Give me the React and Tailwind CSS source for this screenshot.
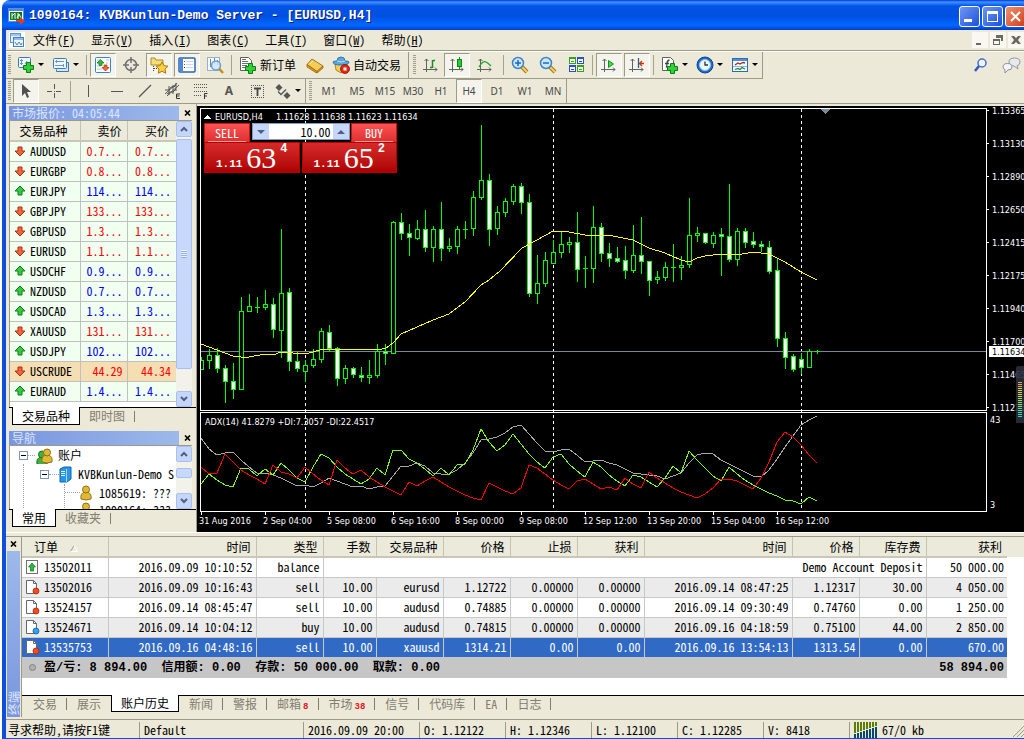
import React from "react";

const QUOTES = [
  ["down", "AUDUSD", "0.7...", "0.7..."],
  ["down", "EURGBP", "0.8...", "0.8..."],
  ["up", "EURJPY", "114...", "114..."],
  ["down", "GBPJPY", "133...", "133..."],
  ["down", "GBPUSD", "1.3...", "1.3..."],
  ["down", "EURUSD", "1.1...", "1.1..."],
  ["up", "USDCHF", "0.9...", "0.9..."],
  ["up", "NZDUSD", "0.7...", "0.7..."],
  ["up", "USDCAD", "1.3...", "1.3..."],
  ["down", "XAUUSD", "131...", "131..."],
  ["up", "USDJPY", "102...", "102..."],
  ["down", "USCRUDE", "44.29", "44.34"],
  ["up", "EURAUD", "1.4...", "1.4..."],
];

const ORDERS = [
  ["red", "13502016", "2016.09.09 10:16:43", "sell", "10.00", "eurusd", "1.12722", "0.00000", "0.00000", "2016.09.14 08:47:25", "1.12317", "30.00", "4 050.00"],
  ["red", "13524157", "2016.09.14 08:45:47", "sell", "10.00", "audusd", "0.74885", "0.00000", "0.00000", "2016.09.14 09:30:49", "0.74760", "0.00", "1 250.00"],
  ["blue", "13524671", "2016.09.14 10:04:12", "buy", "10.00", "audusd", "0.74815", "0.00000", "0.00000", "2016.09.16 04:18:59", "0.75100", "44.00", "2 850.00"],
  ["red", "13535753", "2016.09.16 04:48:16", "sell", "10.00", "xauusd", "1314.21", "0.00", "0.00", "2016.09.16 13:54:13", "1313.54", "0.00", "670.00"],
];

// high, body top, body bottom, low, bearish
const CANDLES = [
  [357, 360, 369, 369, 0], [349, 355, 360, 368, 0], [348, 355, 368, 372, 1], [365, 368, 381, 402, 1],
  [363, 381, 389, 398, 1], [297, 311, 389, 389, 0], [294, 306, 311, 311, 0], [297, 307, 307, 312, 0],
  [290, 304, 307, 309, 0], [298, 304, 329, 337, 1], [229, 293, 330, 357, 0], [288, 292, 361, 370, 1],
  [352, 361, 368, 371, 1], [360, 365, 371, 381, 0], [349, 359, 365, 367, 0], [328, 331, 359, 362, 0],
  [325, 332, 348, 351, 1], [347, 348, 378, 385, 1], [365, 368, 378, 383, 0], [367, 368, 374, 377, 1],
  [367, 375, 377, 381, 1], [360, 375, 377, 383, 0], [344, 351, 375, 377, 0], [344, 351, 353, 364, 1],
  [221, 222, 353, 353, 0], [213, 222, 233, 239, 1], [224, 233, 237, 255, 1], [220, 229, 238, 239, 0],
  [210, 229, 247, 251, 1], [226, 229, 247, 261, 0], [202, 229, 248, 260, 1], [238, 246, 248, 251, 0],
  [226, 229, 246, 253, 0], [221, 229, 229, 238, 0], [191, 197, 228, 235, 0], [125, 180, 197, 199, 0],
  [174, 180, 229, 245, 1], [206, 212, 228, 234, 0], [198, 201, 212, 216, 0], [184, 186, 201, 204, 0],
  [183, 186, 202, 213, 1], [194, 202, 293, 296, 1], [255, 283, 293, 303, 0], [252, 260, 283, 286, 0],
  [240, 252, 263, 263, 0], [231, 244, 252, 257, 0], [237, 242, 244, 252, 0], [212, 242, 269, 281, 1],
  [256, 268, 269, 287, 0], [206, 227, 268, 282, 0], [223, 227, 253, 261, 1], [243, 253, 258, 266, 1],
  [247, 258, 261, 262, 1], [246, 260, 270, 278, 1], [225, 255, 270, 272, 0], [217, 255, 261, 273, 1],
  [261, 261, 280, 295, 1], [271, 277, 279, 283, 0], [262, 267, 277, 280, 0], [244, 267, 268, 281, 0],
  [256, 265, 267, 279, 0], [198, 235, 264, 267, 0], [227, 233, 235, 241, 0], [233, 233, 242, 243, 1],
  [232, 235, 243, 247, 0], [228, 234, 236, 275, 1], [184, 236, 259, 261, 1], [228, 231, 259, 265, 0],
  [228, 231, 242, 247, 1], [232, 241, 244, 247, 1], [241, 244, 246, 251, 1], [241, 247, 271, 273, 1],
  [259, 270, 338, 346, 1], [332, 338, 357, 368, 1], [354, 356, 369, 371, 1], [353, 359, 367, 373, 1],
  [349, 351, 367, 367, 0], [350, 351, 351, 353, 0],
];

const MA =
  "201,344 217,350 233,356 241,357 249,357 265,354 273,355 281,352 305,354 324,349 363,349 378,350 386,348 393,343 401,334 417,327 433,320 449,314 465,302 481,285 489,280 500,271 522,248 537,240 553,231 569,232 585,235 613,236 633,240 649,248 665,253 681,260 689,262 697,258 705,256 721,254 737,255 753,252 769,254 785,262 801,272 817,280";

const ADX = [438, 449, 455, 453, 452, 460, 467, 473, 473, 475, 478, 482, 486, 485, 487, 483, 478, 481, 484, 487, 486, 489, 487, 486, 476, 466, 466, 463, 466, 473, 474, 474, 470, 463, 453, 440, 439, 437, 433, 427, 425, 434, 443, 451, 452, 450, 449, 455, 462, 461, 460, 463, 465, 469, 473, 474, 475, 476, 479, 476, 473, 463, 455, 453, 454, 460, 464, 468, 472, 476, 477, 470, 459, 447, 436, 425, 420, 416];
const DI_PLUS = [484, 474, 480, 485, 487, 468, 469, 476, 469, 475, 463, 470, 478, 482, 467, 454, 458, 467, 474, 479, 484, 479, 468, 475, 450, 450, 459, 463, 469, 476, 468, 475, 465, 464, 450, 429, 442, 451, 445, 434, 444, 454, 462, 468, 457, 454, 464, 471, 477, 462, 467, 475, 481, 486, 475, 477, 482, 487, 478, 466, 473, 451, 460, 468, 476, 481, 467, 474, 480, 485, 489, 493, 496, 500, 501, 504, 497, 501];
const DI_MINUS = [467, 474, 473, 454, 462, 470, 475, 479, 484, 465, 472, 474, 478, 467, 474, 480, 485, 460, 468, 474, 470, 477, 482, 487, 491, 495, 482, 486, 481, 477, 482, 487, 491, 495, 498, 500, 483, 487, 491, 494, 488, 465, 468, 474, 480, 485, 489, 481, 479, 484, 489, 487, 490, 478, 484, 488, 472, 478, 483, 488, 492, 495, 498, 494, 488, 479, 479, 481, 485, 489, 478, 462, 442, 432, 437, 445, 455, 463];

const PRICES = ["1.13365", "1.13130", "1.12890", "1.12650", "1.12415", "1.12175", "1.11940", "1.11700", "1.11465", "1.11225"];
const DATES = ["31 Aug 2016", "2 Sep 04:00", "5 Sep 08:00", "6 Sep 16:00", "8 Sep 00:00", "9 Sep 08:00", "12 Sep 12:00", "13 Sep 20:00", "15 Sep 04:00", "16 Sep 12:00"];

const toPoints = (ys) => ys.map((y, i) => `${201 + 8 * i},${y}`).join(" ");

/* ---------- icons ---------- */

const Svg = ({ w = 18, h = 18, children }) => (
  <svg width={w} height={h} viewBox={`0 0 ${w} ${h}`} fill="none" className="shrink-0">
    {children}
  </svg>
);

const Plus = ({ x, y }) => (
  <path
    transform={`translate(${x} ${y})`}
    d="M3.5.5h4v3h3v4h-3v3h-4v-3h-3v-4h3z"
    fill="#2fd03a"
    stroke="#0a7d12"
  />
);

const AppIcon = () => (
  <Svg w={17} h={17}>
    <rect x="0.5" y="0.5" width="15" height="13" fill="#fff" stroke="#5b8fd8" />
    <path d="M1 2h14" stroke="#4a86e0" strokeWidth="2" />
    <rect x="2" y="4" width="12" height="8" fill="#0d7a1c" />
    <path d="M4 5v6M7 5v6M4 8l3-3M9 10l2-4 2 4M10 5v6" stroke="#fff" />
    <path d="M8 12h4V9l5 4-5 4v-3H8z" fill="#e83b22" />
  </Svg>
);

const ChartDocIcon = () => (
  <Svg w={16} h={16}>
    <rect width="16" height="16" fill="#fff" />
    <rect x="1.5" y="1.5" width="10" height="9" fill="#eaf2ff" stroke="#5a96dc" />
    <path d="M2 3h9" stroke="#5a96dc" />
    <rect x="4.5" y="5.5" width="10" height="9" fill="#eef5ff" stroke="#3f80d0" />
    <path d="M5 7h9" stroke="#3f80d0" />
    <path d="M6 10l2 3 2-3 2 3 1-2" stroke="#3f80d0" />
  </Svg>
);

const NewChartIcon = () => (
  <Svg>
    <rect x="1.5" y="1.5" width="12" height="10" rx="1" fill="#f2f8ff" stroke="#3a78b8" />
    <path d="M4.500 3v6M3 4.500h3M3 7.500h3M8 8l2-3" stroke="#6898c8" />
    <Plus x={6} y={6} />
  </Svg>
);

const ProfilesIcon = () => (
  <Svg>
    <path d="M4.500 13.500v2h12v-9h-2" fill="#d8e8fa" stroke="#3a78b8" />
    <rect x="1.5" y="2.5" width="13" height="10" rx="1" fill="#eff6ff" stroke="#3a78b8" />
    <path d="M3 5.500h9M3 9.500h9M4.500 4v3M11.500 8v3" stroke="#6898c8" />
  </Svg>
);

const MarketIcon = () => (
  <Svg>
    <rect x="1.5" y="1.500" width="15" height="15" rx="1" fill="#fff" stroke="#3f80c8" />
    <path d="M3 4h3M3 7h1M3 10h4M3 13h5M12 4h3M12 7h2" stroke="#a8c8e8" />
    <path d="M6.500 3.500l3.500 3.500H8v2.500H5V7H3z" fill="#2fb83a" stroke="#0a7d12" strokeWidth=".7" />
    <path d="M11.500 15l3.500-3.500h-2V9h-3v2.500H8z" fill="#f06a3a" stroke="#b02a08" strokeWidth=".7" />
  </Svg>
);

const TargetIcon = () => (
  <Svg>
    <circle cx="9" cy="9" r="5.500" stroke="#707070" strokeWidth="1.500" />
    <path d="M9 1v6M9 11v6M1 9h6M11 9h6" stroke="#707070" strokeWidth="1.500" />
  </Svg>
);

const STAR = "M12 6l1.900 3.600 4.100.6-3 2.900.7 4.100L12 15.300l-3.700 1.900.7-4.100-3-2.900 4.100-.6z";

const NavigatorIcon = () => (
  <Svg>
    <path d="M1 2h4l1 2h7v5H1z" fill="#f6dc78" stroke="#b08a20" />
    <path d="M3.500 10v6M4 12.500h4" stroke="#444" strokeDasharray="1 1" />
    <path d={STAR} fill="#f8d048" stroke="#b07808" />
  </Svg>
);

const TerminalIcon = () => (
  <Svg>
    <rect x="1" y="2" width="16" height="14" rx="1" fill="#fff" stroke="#2c64b0" strokeWidth="1.500" />
    <rect x="2" y="3" width="3" height="12" fill="#4a88d8" />
    <path d="M8 5.500h7M8 8.500h7M8 11.500h7" stroke="#c8d8ea" />
    <path d="M6 5.500h1M6 8.500h1" stroke="#e03020" />
    <path d="M6 11.500h1" stroke="#222" />
  </Svg>
);

const TesterIcon = () => (
  <Svg>
    <rect x="1.5" y="1.5" width="12" height="13" fill="#f6f9fd" stroke="#9ab0c8" />
    <path d="M4.500 3v8M8.500 2v6M11.500 4v5" stroke="#6888b0" />
    <circle cx="10" cy="9.500" r="4.500" fill="#cfe6fa" fillOpacity=".8" stroke="#6aa0d0" strokeWidth="1.500" />
    <path d="M13.500 13l3.500 4" stroke="#c89018" strokeWidth="2.500" />
  </Svg>
);

const NewOrderIcon = () => (
  <Svg>
    <path d="M1.500 1.500h8l3 3v10h-11z" fill="#fff" stroke="#606060" />
    <path d="M3 5.500h6M3 7.500h7M3 9.500h5M3 11.500h4M3 3.500h4" stroke="#707070" />
    <Plus x={6} y={7} />
  </Svg>
);

const BookIcon = () => (
  <Svg>
    <path d="M1 8.500L6 3l11 7-6 5.500z" fill="#f4cc58" stroke="#a87010" />
    <path d="M1 8.500v2.500l9.500 6 .5-1.500zM11 15.500l6-5.500v2l-6 5z" fill="#d89c28" stroke="#a06808" strokeWidth=".8" />
    <path d="M4 8l3-3" stroke="#fff0b0" />
  </Svg>
);

const AutoTradeIcon = () => (
  <Svg>
    <path d="M3 8l1 6 5 3 5-3 1-6z" fill="#f0d058" stroke="#b08818" />
    <path d="M1 6q0-1 4-1 0-4 4-4t4 4q4 0 4 1 0 3-8 3T1 6z" fill="#5aa8dc" stroke="#2c78b0" />
    <path d="M5 5q4 2 8 0" stroke="#b8e0f8" />
    <circle cx="13" cy="13" r="4.500" fill="#e02818" stroke="#980c04" strokeWidth=".8" />
    <rect x="11.500" y="11.500" width="3" height="3" fill="#fff" />
  </Svg>
);

const Axes = () => (
  <g stroke="#606060">
    <path d="M4.500 3v13M1 13.500h14" />
    <path d="M2.500 5l2-2 2 2M13 11.500l2 2-2 2" />
  </g>
);

const BarsIcon = () => (
  <Svg>
    <Axes />
    <path d="M10.500 4v8M8 11.500h2M11 4.500h2" stroke="#109020" strokeWidth="1.500" />
  </Svg>
);

const CandleIcon = () => (
  <Svg>
    <Axes />
    <path d="M11.500 1v12" stroke="#0a8a18" />
    <rect x="9.5" y="3.500" width="4" height="7" fill="#2cc83c" stroke="#0a8a18" />
  </Svg>
);

const LineIcon = () => (
  <Svg>
    <Axes />
    <path d="M3 11q4-7 7-5 2 1 5 4" stroke="#20a030" strokeWidth="1.300" />
  </Svg>
);

const ZoomIcon = ({ plus }) => (
  <Svg>
    <path d="M11 11l5 5" stroke="#a87810" strokeWidth="4" />
    <path d="M11 11l5 5" stroke="#f4d060" strokeWidth="2" />
    <circle cx="7" cy="7" r="5.500" fill="#c8e6fc" stroke="#3c84c8" strokeWidth="1.500" />
    <path d={plus ? "M4 7h6M7 4v6" : "M4 7h6"} stroke="#2068b0" strokeWidth="1.500" />
  </Svg>
);

const TilesIcon = () => (
  <Svg>
    {[
      [2, 1, "#3ca014"],
      [10, 1, "#2850c8"],
      [2, 9, "#2850c8"],
      [10, 9, "#3ca014"],
    ].map(([x, y, c]) => (
      <g key={`${x}-${y}`}>
        <rect x={x} y={y} width="7" height="7" fill={c} />
        <rect x={x + 1} y={y + 2} width="5" height="4" fill="#f2f6ff" />
        <path d={`M${x + 2} ${y + 4.500}h3`} stroke={c} />
      </g>
    ))}
  </Svg>
);

const ScrollIcon = () => (
  <Svg>
    <Axes />
    <path d="M8.500 4.500v7l5-3.500z" fill="#4cd84c" stroke="#109020" />
  </Svg>
);

const ShiftIcon = () => (
  <Svg>
    <Axes />
    <path d="M10.500 2v10" stroke="#2c5c90" strokeWidth="1.300" />
    <path d="M16 7.500h-4M14 5l-2.500 2.500L14 10" stroke="#c83808" strokeWidth="1.300" />
  </Svg>
);

const IndicatorIcon = () => (
  <Svg>
    <path d="M1.500 1.500h8l3 3v10h-11z" fill="#fff" stroke="#606060" />
    <path d="M5 11.500q1-1 1-4t2.500-3.500M4 7.500h4" stroke="#444" strokeWidth="1.300" />
    <Plus x={6} y={7} />
  </Svg>
);

const ClockIcon = () => (
  <Svg>
    <circle cx="9" cy="9" r="8" fill="#1c6cc8" stroke="#0c488c" />
    <circle cx="9" cy="9" r="5.500" fill="#eef6ff" stroke="#8cc0f0" />
    <path d="M9 5.500V9h3" stroke="#333" strokeWidth="1.300" />
  </Svg>
);

const TemplateIcon = () => (
  <Svg>
    <rect x="1.5" y="2.500" width="15" height="13" fill="#f4f9ff" stroke="#2c6cb0" />
    <path d="M2 4h14" stroke="#4a90dc" strokeWidth="2" />
    <path d="M4 9l3-2 2 1 3-1.500 2 .5" stroke="#b02818" strokeWidth="1.300" />
    <path d="M2 10.500h14" stroke="#8cb4e0" />
    <path d="M4 13.500l3-1 2 1 2-2 3 1.500" stroke="#188828" strokeWidth="1.300" />
  </Svg>
);

const SearchIcon = () => (
  <Svg w={16} h={16}>
    <circle cx="9" cy="6" r="4" fill="#f0f6ff" stroke="#4470d0" strokeWidth="1.500" />
    <path d="M6 9l-4 5" stroke="#3058c0" strokeWidth="2.500" />
  </Svg>
);

const ChatIcon = () => (
  <Svg w={20} h={18}>
    <path d="M8 6q0-4 5.500-4T19 6q0 3-3 3.800L17 13l-4-3Q8 10 8 6z" fill="#e8e8f0" stroke="#9898a4" />
    <path d="M2 11q0-3.500 4.500-3.500T11 11q0 3-4 3l-3 3v-3.500Q2 13 2 11z" fill="#f4f4fa" stroke="#8c8c98" />
  </Svg>
);

const CursorIcon = () => (
  <Svg>
    <path d="M5 2v12l3-3 2 5 2-1-2-5h4z" fill="#505050" />
  </Svg>
);
const CrosshairIcon = () => (
  <Svg>
    <path d="M9.500 2v5M9.500 11v5M2 9.500h5M11 9.500h5M9 9.500h1" stroke="#555" />
  </Svg>
);
const VLineIcon = () => (
  <Svg>
    <path d="M8.500 3v12" stroke="#555" />
  </Svg>
);
const HLineIcon = () => (
  <Svg>
    <path d="M3 9.500h12" stroke="#555" />
  </Svg>
);
const TrendIcon = () => (
  <Svg>
    <path d="M3 15L15 3" stroke="#555" strokeWidth="1.300" />
  </Svg>
);
const ChannelIcon = () => (
  <Svg>
    <path d="M1 12L13 1M3 14L15 3M1 8h4l2-3h3l2-2M3 12l3-2h3l3-3M5 4v9M9 3v9M12 1v8" stroke="#555" />
    <path d="M16 12h-3.500v4.500H16M12.500 14h3" stroke="#333" />
  </Svg>
);
const FiboIcon = () => (
  <Svg>
    <path d="M2 2.500h14M2 5.500h14M2 9.500h14M2 13.500h8" stroke="#555" strokeDasharray="1 1" />
    <path d="M15.500 11.500h-3V17M12.500 14h2.500" stroke="#333" />
  </Svg>
);
const LabelIcon = () => (
  <Svg>
    <path d="M3 3.500h13M3 15.500h13M3.500 3v13M15.500 3v13" stroke="#555" strokeDasharray="1 1" />
    <path d="M6 6.500h7M9.500 6v8" stroke="#444" strokeWidth="1.800" />
  </Svg>
);
const ArrowsIcon = () => (
  <Svg>
    <path d="M5 2l3.500 3.500L5 9 1.500 5.500zM13 10l3.500 3.500L13 17l-3.500-3.500z" fill="#555" />
    <path d="M4 9.500l3 3 5-5" stroke="#555" strokeWidth="1.300" />
  </Svg>
);

const Trend = ({ dir }) => (
  <Svg w={12} h={12}>
    {dir === "up" ? (
      <path d="M6 1l5 5H8v4H4V6H1z" fill="#3cc83c" stroke="#0a7d20" />
    ) : (
      <path d="M6 11L1 6h3V2h4v4h3z" fill="#f0643c" stroke="#b03010" />
    )}
  </Svg>
);

const DocIcon = ({ kind }) => (
  <Svg w={15} h={16}>
    {kind === "balance" ? (
      <>
        <rect x="1.5" y="1.500" width="11" height="13" fill="#fff" stroke="#707070" />
        <path d="M7 4l3.500 4H8.500v4h-3V8h-2z" fill="#2cb83c" stroke="#0a7d12" strokeWidth=".7" />
      </>
    ) : (
      <>
        <path d="M1.500 1.500h7l3 3v10h-10z" fill="#fff" stroke="#606870" />
        <path d="M8.500 1.500v3h3" stroke="#606870" />
        <circle cx="11" cy="12" r="3" fill={kind === "red" ? "#f04c20" : "#30a0e8"} stroke={kind === "red" ? "#b02808" : "#0c64a8"} strokeWidth=".8" />
      </>
    )}
  </Svg>
);

const Person = ({ x = 0, y = 0, c = "#e0b838", s = "#947010" }) => (
  <g transform={`translate(${x} ${y})`} fill={c} stroke={s}>
    <path d="M1 14q-1-6 4-7h2q5 1 4 7-5 2-10 0z" />
    <circle cx="6" cy="4.500" r="3.500" />
  </g>
);

const ServerIcon = () => (
  <Svg w={13} h={17}>
    <path d="M1 3l4-2h7v12l-4 3H1z" fill="#2c94e8" stroke="#0c64b0" />
    <path d="M7.500 3v13" stroke="#9cd8ff" />
    <path d="M2 5.500h4M2 7.500h4M2 9.500h4" stroke="#dff2ff" />
  </Svg>
);

/* ---------- small controls ---------- */

const Grip = () => (
  <span className="mr-0.5 h-5 w-[3px] shrink-0 bg-[repeating-linear-gradient(180deg,#a09d8a_0_1px,#ece9d8_1px_2px)]" />
);

const Sep = () => <span className="mx-[3px] h-5 w-px shrink-0 bg-[#a5a291]" />;

const Gap = () => <span className="w-0.5 shrink-0" />;

const Tool = ({ label, pressed, children }) => (
  <button
    aria-label={label}
    aria-pressed={!!pressed}
    className={
      pressed
        ? "flex h-6 w-[26px] shrink-0 items-center justify-center border border-white border-t-[#9d9a88] border-l-[#9d9a88] bg-[#f5f4ec]"
        : "flex h-6 w-[26px] shrink-0 items-center justify-center"
    }
  >
    {children}
  </button>
);

const DropTool = ({ label, children }) => (
  <button aria-label={label} className="flex h-6 w-[35px] shrink-0 items-center justify-center gap-[3px]">
    {children}
    <span className="border-x-[3px] border-t-[3px] border-x-transparent border-t-black" />
  </button>
);

const TextTool = ({ text, children }) => (
  <button className="flex h-6 shrink-0 items-center gap-[3px] px-1 text-[12px] leading-4 text-black">
    {children}
    {text}
  </button>
);

const ArrowBtn = ({ dir }) => (
  <button
    aria-label={dir}
    className="flex h-4 w-4 shrink-0 items-center justify-center rounded-[2px] border border-[#a8c0f0] bg-[#c6d6fb]"
  >
    <svg width="8" height="6" viewBox="0 0 8 6" fill="none" stroke="#4d6185" strokeWidth="2">
      <path d={dir === "up" ? "M1 5l3-3 3 3" : "M1 1l3 3 3-3"} />
    </svg>
  </button>
);

const PanelTitle = ({ title }) => (
  <div className="flex h-[14px] items-center">
    <h2 className="flex-1 bg-gradient-to-r from-[#7a96df] to-[#9db9eb] pl-[3px] text-[12px] leading-[14px] text-[#dbe6fb]">
      {title}
    </h2>
    <button aria-label="close" className="flex h-3 w-[17px] items-center justify-center">
      <svg width="7" height="6" viewBox="0 0 7 6" stroke="#000" strokeWidth="1.600">
        <path d="M1 .5l5 5M6 .5l-5 5" />
      </svg>
    </button>
  </div>
);

const PanelTabs = ({ active, other }) => (
  <div role="tablist" className="flex h-[18px] items-start border-t border-black pl-[3px] leading-4">
    <button role="tab" aria-selected="true" className="-mt-px h-[18px] border border-t-0 border-black bg-white px-[9px]">
      {active}
    </button>
    <button role="tab" aria-selected="false" className="px-[9px] text-[#817e6f]">
      {other}
    </button>
    <span className="mt-[3px] h-[11px] w-px bg-[#817e6f]" />
  </div>
);

const Expander = () => (
  <button aria-label="collapse" className="flex size-[9px] shrink-0 items-center justify-center border border-[#7898b5] bg-white">
    <span className="h-px w-[5px] bg-black" />
  </button>
);

/* ---------- page sections ---------- */

const TitleBar = () => (
  <header className="flex h-[30px] items-center gap-1 overflow-hidden rounded-tl-lg bg-[linear-gradient(180deg,#0831d9_0,#3d95ff_2px,#0453e8_6px,#0050e0_16px,#0068ff_25px,#0050e8_28px,#0038b8_30px)] pt-0.5 pl-[6px]">
    <AppIcon />
    <h1 className="flex-1 truncate font-['Liberation_Mono',monospace] text-[13px] font-bold leading-5 text-white [text-shadow:1px_1px_#0a1883]">
      1090164: KVBKunlun-Demo Server - [EURUSD,H4]
    </h1>
    <div className="-mr-0.5 flex shrink-0 gap-0.5">
      <button aria-label="minimize" className="flex size-[21px] items-end rounded-[3px] border border-white bg-gradient-to-br from-[#6f94f4] to-[#1d4fd8] pb-1 pl-1">
        <span className="h-[3px] w-2 bg-white" />
      </button>
      <button aria-label="maximize" className="flex size-[21px] items-center justify-center rounded-[3px] border border-white bg-gradient-to-br from-[#6f94f4] to-[#1d4fd8]">
        <span className="size-[11px] border border-t-[3px] border-white" />
      </button>
      <button aria-label="close window" className="flex size-[21px] items-center justify-center rounded-[3px] border border-white bg-gradient-to-br from-[#f09070] to-[#d03a10]">
        <svg width="11" height="11" viewBox="0 0 11 11" stroke="#fff" strokeWidth="2">
          <path d="M1 1l9 9M10 1l-9 9" />
        </svg>
      </button>
    </div>
  </header>
);

const MENUS = [
  ["文件", "F"],
  ["显示", "V"],
  ["插入", "I"],
  ["图表", "C"],
  ["工具", "T"],
  ["窗口", "W"],
  ["帮助", "H"],
];

const MenuBar = () => (
  <nav className="flex h-[21px] items-center border-b border-[#9d9a88] pb-px pl-[3px]">
    <ChartDocIcon />
    <div className="flex flex-1">
      {MENUS.map(([name, key]) => (
        <button key={key} className="px-2 leading-4">
          {name}(<u>{key}</u>)
        </button>
      ))}
    </div>
    <div className="flex shrink-0 gap-0.5">
      {["M3 10h5v2H3z", "M5 2h7v6h-2V5H5zM2 6h7v6H2zM3 8v3h5V8z", "M2 3h3l2 2 2-2h3L9 7l3 4H9L7 9l-2 2H2l3-4z"].map((d) => (
        <button key={d} aria-label="chart window" className="flex h-4 w-4 items-center justify-center bg-[#f8f7f2]">
          <svg width="14" height="14" viewBox="0 0 14 14" fill="#6c6a60" fillRule="evenodd">
            <path d={d} />
          </svg>
        </button>
      ))}
    </div>
  </nav>
);

const ToolBar = () => (
  <div className="flex h-[27px] items-center border-t border-white">
    <div className="flex h-[27px] items-center border-r border-b border-[#9d9a88] pr-[3px] pl-0.5">
      <Grip />
      <DropTool label="new chart"><NewChartIcon /></DropTool>
      <DropTool label="profiles"><ProfilesIcon /></DropTool>
      <Sep />
      <Tool label="market watch" pressed><MarketIcon /></Tool>
      <Gap />
      <Tool label="data window"><TargetIcon /></Tool>
      <Gap />
      <Tool label="navigator" pressed><NavigatorIcon /></Tool>
      <Gap />
      <Tool label="terminal" pressed><TerminalIcon /></Tool>
      <Gap />
      <Tool label="tester"><TesterIcon /></Tool>
      <Sep />
      <TextTool text="新订单"><NewOrderIcon /></TextTool>
      <Gap />
      <Tool label="editor"><BookIcon /></Tool>
      <TextTool text="自动交易"><AutoTradeIcon /></TextTool>
    </div>
    <div className="flex h-[27px] items-center border-r border-b border-[#9d9a88] pl-1">
      <Grip />
      <Tool label="bars"><BarsIcon /></Tool>
      <Tool label="candles" pressed><CandleIcon /></Tool>
      <Gap />
      <Tool label="line"><LineIcon /></Tool>
      <Gap />
      <Sep />
      <Tool label="zoom in"><ZoomIcon plus /></Tool>
      <Gap />
      <Tool label="zoom out"><ZoomIcon /></Tool>
      <Gap />
      <Tool label="tile"><TilesIcon /></Tool>
      <Sep />
      <Tool label="auto scroll" pressed><ScrollIcon /></Tool>
      <Gap />
      <Tool label="shift" pressed><ShiftIcon /></Tool>
      <Sep />
      <DropTool label="indicators"><IndicatorIcon /></DropTool>
      <DropTool label="periods"><ClockIcon /></DropTool>
      <DropTool label="templates"><TemplateIcon /></DropTool>
    </div>
    <div className="ml-auto flex shrink-0 items-center gap-3 pr-[3px]">
      <button aria-label="search"><SearchIcon /></button>
      <button aria-label="chat"><ChatIcon /></button>
    </div>
  </div>
);

const PeriodBar = () => (
  <div className="flex h-[26px] items-center border-b border-[#9d9a88]">
    <div className="flex h-[25px] items-center border-r border-[#9d9a88] pl-0.5">
      <Grip />
      <Tool label="cursor" pressed><CursorIcon /></Tool>
      <Gap />
      <Tool label="crosshair"><CrosshairIcon /></Tool>
      <Sep />
      <Gap />
      <Tool label="vertical line"><VLineIcon /></Tool>
      <Gap />
      <Tool label="horizontal line"><HLineIcon /></Tool>
      <Gap />
      <Tool label="trendline"><TrendIcon /></Tool>
      <Gap />
      <Tool label="channel"><ChannelIcon /></Tool>
      <Gap />
      <Tool label="fibonacci"><FiboIcon /></Tool>
      <Gap />
      <Tool label="text">
        <span className="font-['Noto_Sans',sans-serif] text-[12px] font-bold leading-4 text-[#555]">A</span>
      </Tool>
      <Gap />
      <Tool label="text label"><LabelIcon /></Tool>
      <DropTool label="arrows"><ArrowsIcon /></DropTool>
    </div>
    <div className="flex h-[25px] items-center gap-0.5 border-r border-[#9d9a88] pl-[3px] font-['Noto_Sans',sans-serif] text-[10px] leading-4 text-[#4a4a4a]">
      <Grip />
      {["M1", "M5", "M15", "M30", "H1", "H4", "D1", "W1", "MN"].map((p) => (
        <Tool key={p} label={p} pressed={p === "H4"}>
          {p}
        </Tool>
      ))}
    </div>
  </div>
);

const MarketWatch = () => (
  <section>
    <PanelTitle title="市场报价: 04:05:44" />
    <div className="mr-1 flex h-[287px] overflow-hidden border-t border-l border-[#9d9a88] bg-white">
      <table className="flex-1 table-fixed border-collapse self-start leading-4">
        <colgroup>
          <col className="w-[70px]" />
          <col className="w-[47px]" />
          <col className="w-[49px]" />
        </colgroup>
        <thead>
          <tr className="h-5 border-b-2 border-[#cbc7b8] bg-[#ebeadb] text-right">
            <th className="pr-3 font-normal">交易品种</th>
            <th className="border-l border-[#c5c2b2] pr-[5px] font-normal">卖价</th>
            <th className="border-l border-[#c5c2b2] pr-[7px] font-normal">买价</th>
          </tr>
        </thead>
        <tbody>
          {QUOTES.map(([dir, sym, bid, ask]) => (
            <tr
              key={sym}
              className={
                (sym === "USCRUDE" ? "bg-[#f5deb3]" : "bg-[#f0fff0]") +
                " h-5 border-b border-[#c0c0c0] text-right " +
                (dir === "up" ? "text-[#0000ff]" : "text-[#ff0000]")
              }
            >
              <td className="text-left text-black">
                <span className="flex items-center gap-1 pl-1">
                  <Trend dir={dir} />
                  {sym}
                </span>
              </td>
              <td className="border-l border-[#c0c0c0] pr-1">{bid}</td>
              <td className="border-l border-[#c0c0c0] pr-[5px]">{ask}</td>
            </tr>
          ))}
        </tbody>
      </table>
      <div className="flex w-4 shrink-0 flex-col bg-[#f3f2ea]">
        <ArrowBtn dir="up" />
        <div className="mt-0.5 flex h-[230px] items-center justify-center rounded-[2px] border border-[#a8c0f0] bg-[#c8d8fc]">
          <span className="h-2 w-[6px] bg-[repeating-linear-gradient(180deg,#eef4fe_0_1px,#8cb0f8_1px_2px)]" />
        </div>
        <span className="flex-1" />
        <ArrowBtn dir="down" />
      </div>
    </div>
    <PanelTabs active="交易品种" other="即时图" />
  </section>
);

const Navigator = () => (
  <section>
    <PanelTitle title="导航" />
    <div className="mr-1 flex h-16 overflow-hidden border-t border-l border-[#9d9a88] bg-white">
      <ul className="min-w-0 flex-1 overflow-hidden whitespace-nowrap leading-4">
        <li className="flex h-[18px] items-center pl-[9px]">
          <Expander />
          <span className="w-[7px] border-t border-dotted border-[#a0a0a0]" />
          <Svg w={19} h={17}>
            <Person x={1} y={3} c="#40b040" s="#107818" />
            <Person x={6} y={1} />
          </Svg>
          <span className="pl-1">账户</span>
        </li>
        <li className="ml-[13px] border-l border-dotted border-[#a0a0a0]">
          <div className="flex h-5 items-center pl-4">
            <Expander />
            <span className="w-[10px] border-t border-dotted border-[#a0a0a0]" />
            <ServerIcon />
            <span className="pl-[6px]">KVBKunlun-Demo S</span>
          </div>
          <ul className="ml-10 border-l border-dotted border-[#a0a0a0]">
            {["1085619: ???", "1090164: ???"].map((a) => (
              <li key={a} className="flex h-[17px] items-center">
                <span className="w-[15px] border-t border-dotted border-[#a0a0a0]" />
                <Svg w={13} h={16}>
                  <Person />
                </Svg>
                <span className="pl-[6px]">{a}</span>
              </li>
            ))}
          </ul>
        </li>
      </ul>
      <div className="flex w-4 shrink-0 flex-col bg-[#f3f2ea]">
        <ArrowBtn dir="up" />
        <div className="mt-[6px] h-[10px] rounded-[2px] border border-[#a8c0f0] bg-[#c8d8fc]" />
        <span className="flex-1" />
        <ArrowBtn dir="down" />
      </div>
    </div>
    <PanelTabs active="常用" other="收藏夹" />
  </section>
);

const Candle = ({ i, c: [hi, top, bot, lo, bear] }) => {
  const x = 201 + 8 * i;
  return (
    <g>
      <path d={`M${x + 0.5} ${hi}V${lo + 1}`} stroke="#00ff00" />
      {bot - top < 2 ? (
        <path d={`M${x - 2} ${top + 0.5}h5`} stroke="#00ff00" />
      ) : (
        <rect x={x - 1.5} y={top + 0.5} width="4" height={bot - top} fill={bear ? "#fff" : "#000"} stroke="#00ff00" />
      )}
    </g>
  );
};

const PriceChart = () => (
  <svg
    width="827"
    height="426"
    viewBox="197 106 827 426"
    fill="none"
    shapeRendering="crispEdges"
    className="font-['DejaVu_Sans_Condensed','Noto_Sans',sans-serif] text-[9px]"
  >
    <defs>
      <clipPath id="plot">
        <rect x="201" y="109" width="786" height="402" />
      </clipPath>
    </defs>
    <path d="M305.500 109V511M553.500 109V511M801.500 109V511" stroke="#fff" strokeDasharray="3 3" />
    <path d="M200 351.500H987" stroke="#778899" />
    <g clipPath="url(#plot)">
      {CANDLES.map((c, i) => (
        <Candle key={i} i={i} c={c} />
      ))}
      <polyline points={MA} stroke="#ffff00" />
      <polyline points={toPoints(ADX)} stroke="#a9a9a9" />
      <polyline points={toPoints(DI_PLUS)} stroke="#7cfc00" />
      <polyline points={toPoints(DI_MINUS)} stroke="#ff0000" />
    </g>
    <path d="M200.500 108.500H986.500V410.500H200.500zM200.500 412.500H986.500V511.500H200.500z" stroke="#fff" />
    <path d="M821 109h9l-4.500 5z" fill="#778899" />
    <path d="M204 119h7l-3.500-4z" fill="#fff" />
    <g fill="#fff">
      <text x="215" y="120">EURUSD,H4</text>
      <text x="276" y="120">1.11628 1.11638 1.11623 1.11634</text>
      <text x="205" y="425">ADX(14) 41.8279 +DI:7.3057 -DI:22.4517</text>
      {PRICES.map((p, i) => (
        <g key={p}>
          <rect x="987" y={110 + 33 * i} width="2" height="1" />
          <text x="992" y={114 + 33 * i}>{p}</text>
        </g>
      ))}
      {DATES.map((d, i) => (
        <g key={d}>
          <rect x={201 + 64 * i} y="512" width="1" height="3" />
          <text x={199 + 64 * i} y="524">{d}</text>
        </g>
      ))}
      <text x="990" y="423">43</text>
      <text x="990" y="508">3</text>
    </g>
    <rect x="989" y="346" width="35" height="11" fill="#fff" />
    <text x="992" y="355" fill="#000">1.11634</text>
    <rect x="1016" y="366" width="10" height="57" rx="2" fill="#2a2e3c" fillOpacity=".9" />
    {Array.from({ length: 18 }, (_, i) => (
      <rect
        key={i}
        x="1018"
        y={382 + 2 * i}
        width="4"
        height="1"
        fill={i < 3 ? "#f0a040" : i < 8 ? "#d8d050" : i < 13 ? "#90e060" : "#40d8a8"}
      />
    ))}
  </svg>
);

const Half = ({ big, sup, id }) => (
  <button
    aria-label={id}
    className="flex h-[31px] flex-1 justify-center border border-[#b80000] bg-gradient-to-b from-[#d62a2a] to-[#ae0000] text-white"
  >
    <span className="self-end font-['Liberation_Mono',monospace] text-[11px] font-bold leading-4">1.11</span>
    <span className="self-center px-1 font-['Liberation_Serif',serif] text-[30px] leading-[30px]">{big}</span>
    <span className="font-['Liberation_Mono',monospace] text-[12px] font-bold leading-3">{sup}</span>
  </button>
);

const TradePanel = () => (
  <div className="absolute top-[17px] left-[7px] w-[193px] leading-4">
    <div className="flex justify-between">
      <button className="h-[19px] w-[46px] border border-b-0 border-[#d01010] bg-gradient-to-b from-[#ff5252] to-[#dc3030] text-white">
        <span className="mx-[3px] block border-b border-[#ff9c9c]">SELL</span>
      </button>
      <div className="flex h-[17px] border border-[#7f9db9] bg-white">
        <button aria-label="less" className="flex w-4 items-center justify-center bg-[#c6d6fb]">
          <span className="border-x-4 border-t-4 border-x-transparent border-t-[#4d6185]" />
        </button>
        <input aria-label="volume" defaultValue="10.00" className="h-[15px] w-16 bg-white pr-0.5 text-right text-black" />
        <button aria-label="more" className="flex w-4 items-center justify-center bg-[#c6d6fb]">
          <span className="border-x-4 border-b-4 border-x-transparent border-b-[#4d6185]" />
        </button>
      </div>
      <button className="h-[19px] w-[46px] border border-b-0 border-[#d01010] bg-gradient-to-b from-[#ff5252] to-[#dc3030] text-white">
        <span className="mx-[3px] block border-b border-[#ff9c9c]">BUY</span>
      </button>
    </div>
    <div className="flex gap-0.5">
      <Half id="sell at market" big="63" sup="4" />
      <Half id="buy at market" big="65" sup="2" />
    </div>
  </div>
);

const HEADS = ["时间", "类型", "手数", "交易品种", "价格", "止损", "获利", "时间", "价格", "库存费", "获利"];

const cell = "border-l border-[#c8c8c8] pr-[3px]";

const History = () => (
  <div className="flex-1 overflow-hidden bg-white">
    <div className="h-5 w-full bg-[#ebeadb]">
      <table className="w-[985px] table-fixed border-collapse text-right leading-4">
        <colgroup>
          <col className="w-[86px]" />
          <col className="w-[148px]" />
          <col className="w-[67px]" />
          <col className="w-[53px]" />
          <col className="w-[67px]" />
          <col className="w-[67px]" />
          <col className="w-[67px]" />
          <col className="w-[67px]" />
          <col className="w-[148px]" />
          <col className="w-[67px]" />
          <col className="w-[67px]" />
          <col className="w-[81px]" />
        </colgroup>
        <thead>
          <tr className="h-5 border-b-2 border-[#cbc7b8] bg-[#ebeadb]">
            <th className="pl-3 text-left font-normal">
              订单
              <svg width="8" height="7" viewBox="0 0 8 7" fill="none" className="ml-3 inline-block">
                <path d="M.5 6.500L4 .5" stroke="#a09d8a" />
                <path d="M4 .5l3.500 6h-7" stroke="#fff" />
              </svg>
            </th>
            {HEADS.map((h, i) => (
              <th key={i} className="border-l border-[#c5c2b2] pr-[5px] font-normal">
                {h}
              </th>
            ))}
          </tr>
        </thead>
        <tbody>
          <tr className="h-5 border-b border-[#c8c8c8] bg-white">
            <td className="text-left">
              <span className="flex items-center gap-1 pl-[3px]">
                <DocIcon kind="balance" />
                13502011
              </span>
            </td>
            <td className={cell}>2016.09.09 10:10:52</td>
            <td className={cell}>balance</td>
            <td className={cell} colSpan={8}>Demo Account Deposit</td>
            <td className={cell}>50 000.00</td>
          </tr>
          {ORDERS.map(([kind, id, ...rest], r) => (
            <tr
              key={id}
              className={
                r === 3
                  ? "h-5 bg-[#316ac5] text-white"
                  : r % 2
                    ? "h-5 border-b border-[#c8c8c8] bg-white"
                    : "h-5 border-b border-[#c8c8c8] bg-[#ebebeb]"
              }
            >
              <td className="text-left">
                <span className="flex items-center gap-1 pl-[3px]">
                  <DocIcon kind={kind} />
                  {id}
                </span>
              </td>
              {rest.map((v, i) => (
                <td key={i} className={cell}>
                  {v}
                </td>
              ))}
            </tr>
          ))}
          <tr className="h-[21px] bg-[#c6c6c6] font-['Liberation_Mono','Noto_Sans_CJK_SC',monospace] font-bold">
            <td colSpan={11} className="text-left whitespace-pre">
              <span className="flex items-center gap-2 pl-[7px]">
                <span className="size-[7px] rounded-full border border-[#808080] bg-[#b0b0b0]" />
                {"盈/亏: 8 894.00  信用额: 0.00  存款: 50 000.00  取款: 0.00"}
              </span>
            </td>
            <td className="pr-[3px] whitespace-nowrap">58 894.00</td>
          </tr>
        </tbody>
      </table>
    </div>
  </div>
);

const TABS = [["交易"], ["展示"], ["账户历史"], ["新闻"], ["警报"], ["邮箱", "8"], ["市场", "38"], ["信号"], ["代码库"], ["EA"], ["日志"]];

const Terminal = () => (
  <section className="flex h-[181px] border-t border-[#9d9a88] pl-px">
    <div className="flex w-[13px] shrink-0 flex-col">
      <button aria-label="close" className="flex h-[14px] items-center justify-center">
        <svg width="7" height="6" viewBox="0 0 7 6" stroke="#000" strokeWidth="1.600">
          <path d="M1 .5l5 5M6 .5l-5 5" />
        </svg>
      </button>
      <h2 className="flex flex-1 rotate-180 items-start bg-gradient-to-b from-[#7a96df] to-[#9db9eb] pt-0.5 leading-[13px] text-[#dbe6fb] [writing-mode:vertical-rl]">
        <span className="[text-orientation:sideways]">终端</span>
      </h2>
    </div>
    <div className="ml-px flex min-w-0 flex-1 flex-col border-l border-[#9d9a88]">
      <History />
      <div role="tablist" className="flex h-[22px] items-start border-t border-black pl-px leading-4 text-[#817e6f]">
        {TABS.map(([name, badge], i) =>
          name === "账户历史" ? (
            <button key={name} role="tab" aria-selected="true" className="-mt-px h-[17px] border border-t-0 border-black bg-white px-[9px] text-black">
              {name}
            </button>
          ) : (
            <button key={name} role="tab" aria-selected="false" className="flex items-center pl-[10px]">
              {name}
              {badge && <span className="ml-0.5 pt-[6px] font-['Liberation_Mono',monospace] text-[9px] font-bold leading-[10px] text-[#f01020]">{badge}</span>}
              <span className={i === 1 ? "ml-[10px]" : "ml-[9px] h-3 w-px bg-[#817e6f]"} />
            </button>
          )
        )}
      </div>
    </div>
  </section>
);

const StatusBar = () => (
  <footer className="flex h-[19px] items-center border-t border-[#9d9a88] pt-px leading-4 whitespace-nowrap">
    <span className="w-[133px] pl-0.5">寻求帮助,请按F1键</span>
    <span className="w-[164px] border-l border-[#9d9a88] pl-1">Default</span>
    <span className="w-[116px] border-l border-[#9d9a88] pl-1">2016.09.09 20:00</span>
    {["O: 1.12122", "H: 1.12346", "L: 1.12100", "C: 1.12285", "V: 8418"].map((t) => (
      <span key={t} className="w-[86px] border-l border-[#9d9a88] pl-1">
        {t}
      </span>
    ))}
    <span className="flex flex-1 items-center gap-1 border-l border-[#9d9a88] pl-1">
      <svg width="24" height="16" viewBox="0 0 24 16" shapeRendering="crispEdges">
        {[0, 1, 2, 3, 4, 5, 6, 7].map((i) => (
          <g key={i}>
            <rect x={i * 3} y="0" width="2" height={11 - i} fill="#5c7c08" />
            <rect x={i * 3} y={12 - i} width="2" height={4 + i} fill="#084868" />
          </g>
        ))}
      </svg>
      67/0 kb
    </span>
    <svg width="12" height="14" viewBox="0 0 12 14" stroke="#a09d8a">
      <path d="M1 14L12 3M5 14l7-7M9 14l3-3" />
    </svg>
  </footer>
);

const App = () => {
  return (
    <div className="min-h-screen overflow-hidden bg-white pl-0.5 font-['Noto_Sans_CJK_SC',sans-serif] text-[12px] text-black [font-feature-settings:'hwid']">
      <TitleBar />
      <div className="border-b border-l-4 border-[#0f4fdc] bg-[#ece9d8]">
        <MenuBar />
        <ToolBar />
        <PeriodBar />
        <main className="flex h-[428px]">
          <aside className="flex w-[191px] shrink-0 flex-col gap-[6px] border-r border-[#9d9a88] pt-0.5 pl-[3px]">
            <MarketWatch />
            <Navigator />
          </aside>
          <div className="relative mt-0.5 min-w-0 flex-1 overflow-hidden bg-black">
            <PriceChart />
            <TradePanel />
          </div>
        </main>
        <div className="h-1 border-t border-white" />
        <Terminal />
        <div className="h-0.5" />
        <StatusBar />
      </div>
    </div>
  );
};

export default App;
